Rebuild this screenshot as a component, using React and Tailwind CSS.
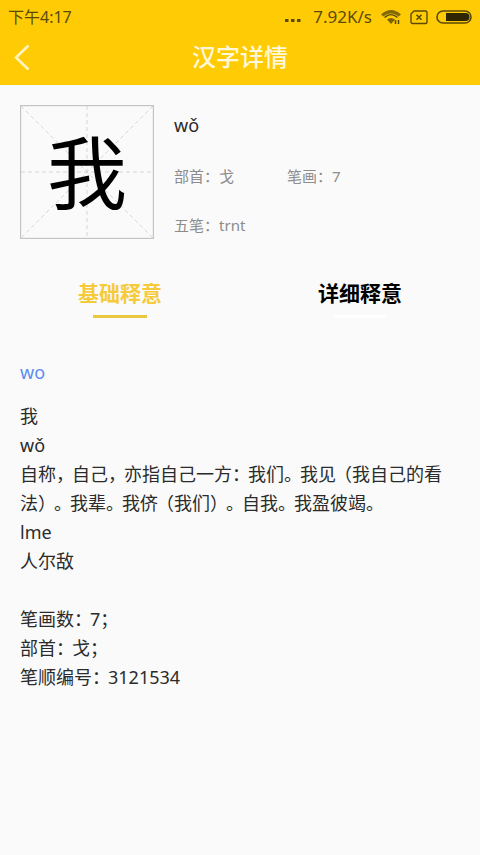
import { useState } from 'react'

const details = {
  char: '我',
  pinyin: 'wǒ',
  radical: '戈',
  strokes: '7',
  wubi: 'trnt',
}

const basicLines = [
  '我',
  'wǒ',
  '自称，自己，亦指自己一方：我们。我见（我自己的看法）。我辈。我侪（我们）。自我。我盈彼竭。',
  'lme',
  '人尔敌',
  '',
  '笔画数：7；',
  '部首：戈；',
  '笔顺编号：3121534',
]

const tabs = [
  { id: 'basic', label: '基础释意' },
  { id: 'detail', label: '详细释意' },
]

// Chinese punctuation set a little tighter than a full em
function Prose({ text }) {
  return text.split(/([，。：；（）]|[\u4e00-\u9fff])/).filter(Boolean).map((part, i) => {
    if (part === '（') {
      return <span key={i} className="ml-[7px] [font-feature-settings:'halt']">{part}</span>
    }
    if (/^[，。：；）]$/.test(part)) {
      return <span key={i} className="mr-[7px] [font-feature-settings:'halt']">{part}</span>
    }
    return part
  })
}

function StatusBar() {
  return (
    <div className="flex h-8 items-center justify-between pl-2 pr-2 pt-0.5 text-[#5a4a08]">
      <span className="text-[16px] leading-6">下午4:17</span>
      <div className="flex items-center">
        <svg className="mr-3 h-4 w-4" viewBox="0 0 16 16" fill="currentColor">
          <rect x="0" y="10" width="3.5" height="3" />
          <rect x="6" y="10" width="3.5" height="3" />
          <rect x="12" y="10" width="3.5" height="3" />
        </svg>
        <span className="text-[17px] leading-6">7.92K/s</span>
        <svg className="ml-2 h-4 w-[22px]" viewBox="0 0 22 16" fill="none" stroke="currentColor">
          <path d="M1 5.5C7 -0.5 15 -0.5 21 5.5L18.5 7.5C14 3.5 8 3.5 3.5 7.5Z" fill="currentColor" stroke="none" opacity="0.75" />
          <path d="M4.5 8.5C8.5 4.8 13.5 4.8 17.5 8.5" strokeWidth="1.4" />
          <path d="M7 10.5C9.5 8.5 12.5 8.5 15 10.5L11 15Z" fill="currentColor" stroke="none" opacity="0.8" />
          <path d="M15.5 11v4M18.5 11v4" strokeWidth="1.5" />
        </svg>
        <svg className="ml-2 h-4 w-[18px]" viewBox="0 0 18 16" fill="none" stroke="currentColor">
          <path d="M4 2H15.5Q17 2 17 3.5V13Q17 14.5 15.5 14.5H2.5Q1 14.5 1 13V5Z" strokeWidth="1.4" />
          <path d="M6.5 5.8l5 5M11.5 5.8l-5 5" strokeWidth="1.6" />
        </svg>
        <svg className="ml-2 h-4 w-9" viewBox="0 0 36 16">
          <rect x="1" y="2" width="34" height="12" rx="6" fill="none" stroke="currentColor" strokeWidth="1.6" />
          <path d="M10 4H29.5a4 4 0 0 1 0 8H10Z" fill="#2e2502" />
        </svg>
      </div>
    </div>
  )
}

function CharacterGrid({ char }) {
  return (
    <div className="relative h-[134px] w-[134px] shrink-0">
      <svg className="h-full w-full" viewBox="0 0 134 134" fill="none" stroke="#d6d6d6">
        <path d="M67 1V133M1 67H133M1 1L133 133M133 1L1 133" strokeDasharray="4 3" />
        <rect x="0.5" y="0.5" width="133" height="133" stroke="#c4c4c4" strokeWidth="1.4" />
      </svg>
      <span className="absolute inset-0 flex items-center justify-center text-[80px] leading-none text-black">
        {char}
      </span>
    </div>
  )
}

export default function App() {
  const [active, setActive] = useState('basic')

  return (
    <div className="min-h-screen bg-[#fafafa] font-['Noto_Sans','Noto_Sans_CJK_SC',sans-serif] text-[#2b2b2b]">
      <header className="bg-[#ffcb05] pb-[3px]">
        <StatusBar />
        <div className="grid h-[50px] grid-cols-[48px_1fr_48px] items-center">
          <button aria-label="返回" className="flex h-full items-center pl-3">
            <svg className="h-7 w-5" viewBox="0 0 20 28" fill="none" stroke="#fff3c4" strokeWidth="2.6">
              <path d="M16.5 2.5L4 14.5L16.5 26.5" />
            </svg>
          </button>
          <h1 className="text-center text-[24px] font-medium leading-8 text-[#fff8dc]">汉字详情</h1>
        </div>
      </header>

      <section className="flex gap-5 px-5 pt-5">
        <CharacterGrid char={details.char} />
        <div className="flex-1">
          <p className="pt-2 text-[18px] leading-6">{details.pinyin}</p>
          <dl className="grid grid-cols-[113px_1fr] gap-y-[25px] pt-[27px] text-[15px] leading-6 text-[#8c8c8c]">
            <div className="flex">
              <dt>部首：</dt>
              <dd>{details.radical}</dd>
            </div>
            <div className="flex">
              <dt>笔画：</dt>
              <dd>{details.strokes}</dd>
            </div>
            <div className="flex">
              <dt>五笔：</dt>
              <dd>{details.wubi}</dd>
            </div>
          </dl>
        </div>
      </section>

      <div role="tablist" className="grid grid-cols-2 pt-10">
        {tabs.map((tab) => (
          <button
            key={tab.id}
            role="tab"
            aria-selected={active === tab.id}
            onClick={() => setActive(tab.id)}
            className={`flex flex-col items-center gap-2 text-[21px] font-bold leading-7 ${
              active === tab.id ? 'text-[#f5cb3c]' : 'text-black'
            }`}
          >
            {tab.label}
            <span className={`h-[3px] w-[54px] ${active === tab.id ? 'bg-[#ebc83f]' : 'bg-white'}`} />
          </button>
        ))}
      </div>

      <article className="px-5 pb-8 pt-10 text-[18px] leading-[29px]">
        <h2 className="mb-[15px] text-[#5b8def]">wo</h2>
        {basicLines.map((line, i) => (
          <p key={i} className="min-h-[29px]">
            <Prose text={line} />
          </p>
        ))}
      </article>
    </div>
  )
}
